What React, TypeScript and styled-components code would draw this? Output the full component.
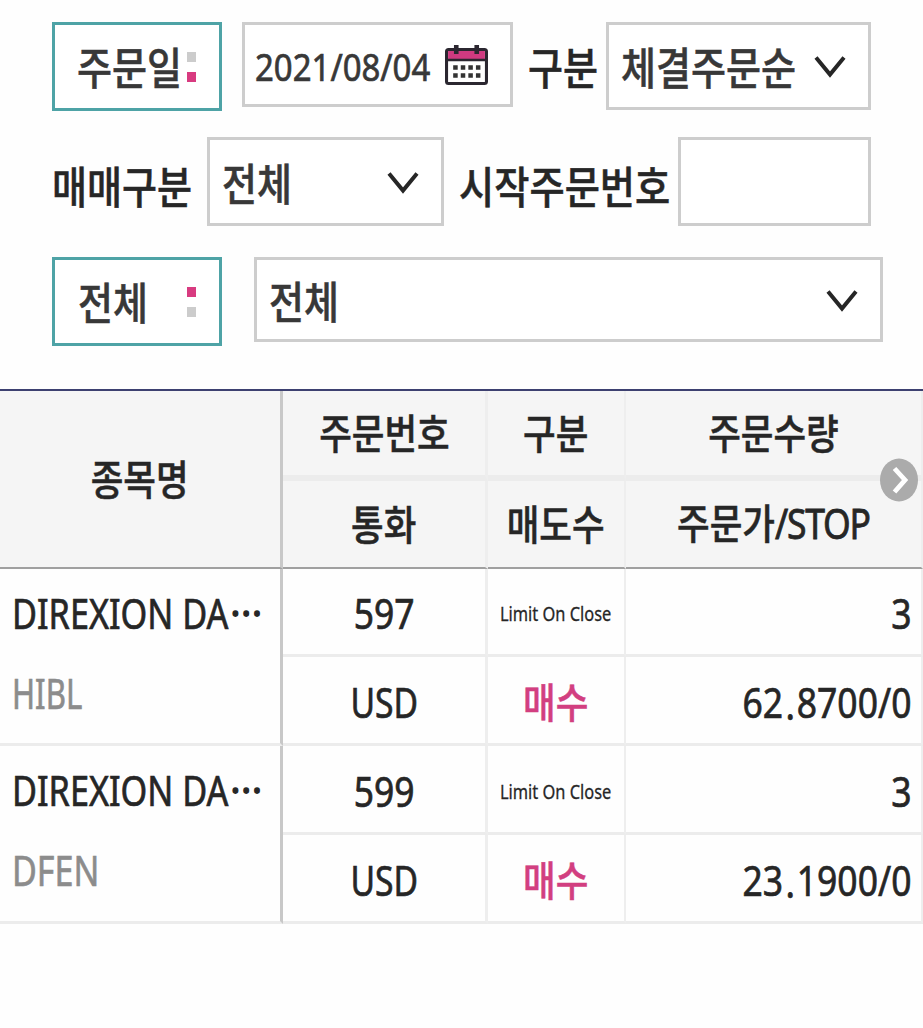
import React from "react";
import styled, { createGlobalStyle } from "styled-components";

const Global = createGlobalStyle`
  * { box-sizing: border-box; }
  body { margin: 0; background: #fefefe; }
`;

const Screen = styled.main`
  width: 923px;
  height: 1028px;
  overflow: hidden;
  color: #262626;
  font-family: "Noto Sans", "Noto Sans CJK KR", sans-serif;
`;

const Filters = styled.section`
  height: 389px;
  padding: 22px 0 0 52px;
`;

const FilterRow = styled.div<{ $height: number }>`
  display: flex;
  align-items: flex-start;
  height: ${(p) => p.$height}px;
`;

const Box = styled.div<{ $w: number; $h: number; $gap?: number; $active?: boolean; $pad?: number }>`
  display: flex;
  flex: none;
  align-items: center;
  justify-content: space-between;
  width: ${(p) => p.$w}px;
  height: ${(p) => p.$h}px;
  margin-left: ${(p) => p.$gap ?? 0}px;
  padding: 0 ${(p) => p.$pad ?? 22}px 0 0;
  border: 3px solid ${(p) => (p.$active ? "#4ea3a6" : "#cdcdcd")};
  background: #fff;
  color: #383838;
`;

const Label = styled.div<{ $w: number; $gap?: number; $drop?: number }>`
  display: flex;
  flex: none;
  align-items: center;
  width: ${(p) => p.$w}px;
  height: 88px;
  margin-left: ${(p) => p.$gap ?? 0}px;
  padding-top: ${(p) => p.$drop ?? 0}px;
`;

const Slot = styled.span<{ $w: number; $left?: number; $top?: number; $bottom?: number }>`
  display: block;
  flex: none;
  width: ${(p) => p.$w}px;
  padding: ${(p) => p.$top ?? 0}px 0 ${(p) => p.$bottom ?? 0}px ${(p) => p.$left ?? 0}px;
`;

/* Condensed face: the glyphs are narrowed horizontally around the aligned edge. */
const Text = styled.span<{
  $size?: number;
  $scale?: number;
  $align?: "left" | "center" | "right";
  $korean?: boolean;
  $color?: string;
  $stroke?: number;
}>`
  display: block;
  flex: none;
  width: max-content;
  font-family: ${(p) =>
    p.$korean ? '"Noto Sans CJK KR", "Noto Sans", sans-serif' : '"Noto Sans", "Noto Sans CJK KR", sans-serif'};
  font-size: ${(p) => p.$size ?? 41}px;
  font-weight: ${(p) => (p.$korean ? 500 : 400)};
  line-height: 1;
  white-space: nowrap;
  color: ${(p) => p.$color ?? "inherit"};
  -webkit-text-stroke: ${(p) => p.$stroke ?? (p.$korean ? 0.5 : 0.7)}px currentColor;
  transform: scaleX(${(p) => p.$scale ?? 0.865});
  transform-origin: ${(p) => p.$align ?? "left"} center;
`;

const Latin = styled.span`
  font-family: "Noto Sans", sans-serif;
  font-weight: 400;
  letter-spacing: -1.4px;
  -webkit-text-stroke: 0.8px currentColor;
`;

const Pips = styled.span`
  display: flex;
  flex-direction: column;
  gap: 10px;
`;

const Pip = styled.i<{ $on?: boolean }>`
  width: 9px;
  height: 10px;
  background: ${(p) => (p.$on ? "#d83b80" : "#cccccc")};
`;

const Table = styled.section`
  position: relative;
  display: grid;
  grid-template-columns: 283px 205px 138px 297px;
  grid-template-rows: 90px 88px 88px 89px 89px 89px;
  border-top: 2px solid #3d4070;
`;

const Cell = styled.div<{ $right?: boolean; $edge?: number; $drop?: number }>`
  display: flex;
  align-items: center;
  justify-content: ${(p) => (p.$right ? "flex-end" : "center")};
  min-width: 0;
  padding: ${(p) => p.$drop ?? 4}px ${(p) => (p.$right ? 10 : 0)}px 0 0;
  border-right: ${(p) => p.$edge ?? 3}px solid #eeeeee;
  border-bottom: 3px solid #ececec;
`;

const HeadCell = styled(Cell)<{ $upper?: boolean }>`
  padding: 0 0 ${(p) => (p.$upper ? 3 : 4)}px;
  background: #f5f5f5;
  border-bottom: ${(p) => (p.$upper ? "6px solid #ececec" : "2px solid #a0a0a0")};
`;

const NameHead = styled(HeadCell)`
  grid-row: span 2;
  border-right-color: #c8c8c8;
`;

const NameCell = styled.div`
  display: flex;
  flex-direction: column;
  grid-row: span 2;
  padding: 24px 0 0 12px;
  gap: 39px;
  border-right: 3px solid #c8c8c8;
  border-bottom: 3px solid #ececec;
`;

const NameLine = styled.div`
  display: flex;
  height: 41px;
`;

const Dot = styled.span`
  margin: 0 2px 0 3px;
  line-height: 0;
  vertical-align: -2px;
`;

const NextButton = styled.button`
  position: absolute;
  top: 67px;
  right: 5px;
  width: 38px;
  height: 44px;
  padding: 0;
  border: 0;
  background: none;
`;

const Chevron = () => (
  <svg width="32" height="24" viewBox="0 0 32 24" fill="none">
    <path d="M2 3.500 16 20.500 30 3.500" stroke="#262626" strokeWidth="4" />
  </svg>
);

const Calendar = () => (
  <svg width="43" height="40" viewBox="0 0 42 40" preserveAspectRatio="none">
    <rect x="1.5" y="4.5" width="39" height="34" rx="2" fill="#fff" stroke="#2b2730" strokeWidth="3" />
    <path d="M3 6h36v8H3z" fill="#cf3a80" />
    <path d="M2 15h38" stroke="#2b2730" strokeWidth="2.600" />
    <path d="M11 0v9M31 0v9" stroke="#2b2730" strokeWidth="4.500" />
    <path d="M8 22.500h27M8 30.500h27" stroke="#333" strokeWidth="4.500" strokeDasharray="4.400 3" />
  </svg>
);

const orders = [
  { name: "DIREXION DA", symbol: "HIBL", symbolScale: 0.76, no: "597", currency: "USD", type: "Limit On Close", side: "매수", qty: "3", price: ["62", "8700/0"] },
  { name: "DIREXION DA", symbol: "DFEN", symbolScale: 0.83, no: "599", currency: "USD", type: "Limit On Close", side: "매수", qty: "3", price: ["23", "1900/0"] },
];

export default function App() {
  return (
    <Screen>
      <Global />
      <Filters>
        <FilterRow $height={115}>
          <Box $w={170} $h={89} $active $pad={23}>
            <Slot $w={110} $left={22} $bottom={1}><Text $korean $size={44}>주문일</Text></Slot>
            <Pips><Pip /><Pip $on /></Pips>
          </Box>
          <Box $w={271} $h={85} $gap={20}>
            <Slot $w={190} $left={10} $top={2}><Text $size={39} $scale={0.845}>2021/08/04</Text></Slot>
            <Calendar />
          </Box>
          <Label $w={78} $gap={15}><Text $korean $size={44}>구분</Text></Label>
          <Box $w={265} $h={88}>
            <Slot $w={180} $left={12}><Text $korean $size={44}>체결주문순</Text></Slot>
            <Chevron />
          </Box>
        </FilterRow>
        <FilterRow $height={120}>
          <Label $w={155} $drop={7}><Text $korean $size={44}>매매구분</Text></Label>
          <Box $w={237} $h={89}>
            <Slot $w={120} $left={12} $top={1}><Text $korean $size={44}>전체</Text></Slot>
            <Chevron />
          </Box>
          <Label $w={219} $gap={15} $drop={7}><Text $korean $size={44} $scale={0.87}>시작주문번호</Text></Label>
          <Box $w={193} $h={89} />
        </FilterRow>
        <FilterRow $height={90}>
          <Box $w={170} $h={89} $active $pad={23}>
            <Slot $w={110} $left={23} $bottom={1}><Text $korean $size={44}>전체</Text></Slot>
            <Pips><Pip $on /><Pip /></Pips>
          </Box>
          <Box $w={629} $h={85} $gap={32}>
            <Slot $w={120} $left={12}><Text $korean $size={44}>전체</Text></Slot>
            <Chevron />
          </Box>
        </FilterRow>
      </Filters>

      <Table>
        <NameHead><Text $korean $align="center">종목명</Text></NameHead>
        <HeadCell $upper><Text $korean $align="center">주문번호</Text></HeadCell>
        <HeadCell $upper $edge={2}><Text $korean $align="center">구분</Text></HeadCell>
        <HeadCell $upper $edge={2}><Text $korean $align="center">주문수량</Text></HeadCell>
        <HeadCell><Text $korean $align="center">통화</Text></HeadCell>
        <HeadCell $edge={2}><Text $korean $align="center">매도수</Text></HeadCell>
        <HeadCell $edge={2}><Text $korean $align="center">주문가<Latin>/STOP</Latin></Text></HeadCell>
        {orders.map((o) => (
          <React.Fragment key={o.no}>
            <NameCell>
              <NameLine>
                <Slot $w={218}><Text $scale={0.835}>{o.name}</Text></Slot>
                <Slot $w={34} $top={1}><Text $korean $size={36} $scale={0.9} $stroke={1.4}>⋯</Text></Slot>
              </NameLine>
              <Text $color="#8c8c8c" $scale={o.symbolScale}>{o.symbol}</Text>
            </NameCell>
            <Cell><Text $align="center">{o.no}</Text></Cell>
            <Cell $edge={2}><Text $size={20.5} $scale={0.8} $stroke={0.3} $align="center">{o.type}</Text></Cell>
            <Cell $right $edge={2}><Text $align="right">{o.qty}</Text></Cell>
            <Cell><Text $align="center" $scale={0.82}>{o.currency}</Text></Cell>
            <Cell $edge={2} $drop={0}><Text $korean $align="center" $color="#d23f80">{o.side}</Text></Cell>
            <Cell $right $edge={2}><Text $align="right">{o.price[0]}<Dot>.</Dot>{o.price[1]}</Text></Cell>
          </React.Fragment>
        ))}
        <NextButton aria-label="다음">
          <svg width="38" height="44" viewBox="0 0 38 44" fill="none">
            <ellipse cx="19" cy="22" rx="19" ry="21.500" fill="#ababab" />
            <path d="M14.500 10.500 25 22 14.500 34" stroke="#fff" strokeWidth="4.800" />
          </svg>
        </NextButton>
      </Table>
    </Screen>
  );
}
